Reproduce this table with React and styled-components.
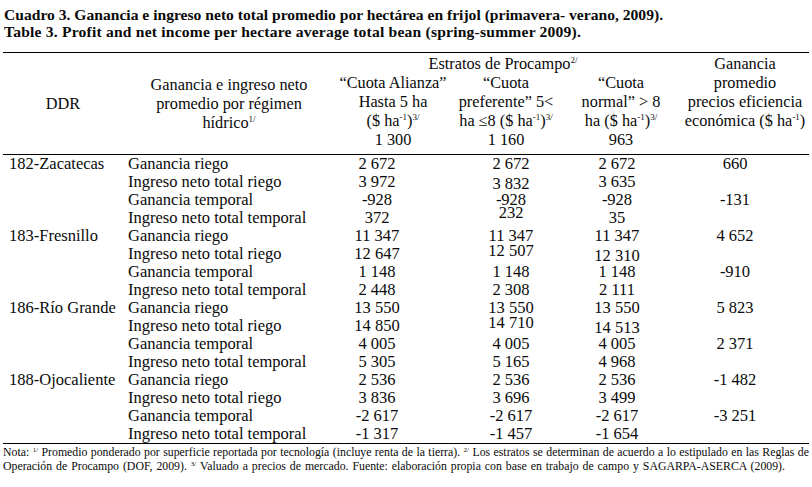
import styled, { createGlobalStyle } from 'styled-components';

const GlobalStyle = createGlobalStyle`
  body {
    margin: 0;
    background: #fff;
  }
`;

const Page = styled.div`
  width: 812px;
  height: 487px;
  overflow: hidden;
  box-sizing: border-box;
  padding: 6px 3px 0 3px;
  background: #fff;
  color: #0a0a0a;
  font-family: 'Liberation Serif', 'Times New Roman', serif;
`;

const Caption = styled.div`
  font-weight: bold;
  font-size: 15.6px;
  line-height: 17px;
  padding-left: 1px;
  margin-bottom: 12px;
`;

const CaptionLine = styled.div`
  white-space: nowrap;
  letter-spacing: ${(p) => p.$spacing || 0}px;
`;

const Table = styled.table`
  width: 806px;
  border-collapse: collapse;
  table-layout: fixed;
  font-size: 16.5px;
  border-top: 1px solid #000;
  border-bottom: 1px solid #000;
`;

const Head = styled.thead`
  border-bottom: 1px solid #000;
`;

const HeadCell = styled.th`
  font-weight: normal;
  font-size: 16.3px;
  line-height: 19px;
  padding: ${(p) => (p.$top ? '1px' : '0')} ${(p) => p.$pr || 0}px ${(p) => p.$pb || 0}px 0;
  text-align: center;
  vertical-align: ${(p) => (p.$middle ? 'middle' : 'top')};
  white-space: nowrap;
`;

const Sup = styled.sup`
  font-size: 9px;
  line-height: 0;
  vertical-align: 6px;
`;

const Row = styled.tr`
  height: 18px;
`;

const LabelCell = styled.td`
  padding: 0 0 0 ${(p) => p.$indent}px;
  line-height: 18px;
  white-space: nowrap;
  text-align: left;
`;

const NumCell = styled.td`
  padding: 0 ${(p) => (p.$shift < 0 ? -2 * p.$shift : 0)}px 0 ${(p) => (p.$shift > 0 ? 2 * p.$shift : 0)}px;
  line-height: 18px;
  text-align: center;
  white-space: nowrap;
`;

/* the scanned original has a few figures sitting off their baseline */
const Nudge = styled.span`
  line-height: 0;
  vertical-align: ${(p) => -p.$dy}px;
`;

const Notes = styled.div`
  font-size: 11.8px;
  line-height: 14px;
  padding: 1px 0 0 0;
`;

const NoteLine = styled.div`
  white-space: nowrap;
  text-align: ${(p) => (p.$justify ? 'justify' : 'left')};
  text-align-last: ${(p) => (p.$justify ? 'justify' : 'auto')};
  word-spacing: ${(p) => p.$wordSpacing || 0}px;
`;

const NoteSup = styled.sup`
  font-size: 7px;
  line-height: 0;
  vertical-align: 4px;
`;

const COLS = [120, 212, 116, 110, 120, 128];
const SHIFTS = [-16, 5, -4, -10];

const rows = [
  { ddr: '182-Zacatecas', label: 'Ganancia riego', v: ['2 672', '2 672', '2 672', '660'] },
  { label: 'Ingreso neto total riego', v: ['3 972', '3 832', '3 635', ''], dy: [0, 2, 0, 0] },
  { label: 'Ganancia temporal', v: ['-928', '-928', '-928', '-131'] },
  { label: 'Ingreso neto total temporal', v: ['372', '232', '35', ''], dy: [0, -5, 0, 0] },
  { ddr: '183-Fresnillo', label: 'Ganancia riego', v: ['11 347', '11 347', '11 347', '4 652'] },
  { label: 'Ingreso neto total riego', v: ['12 647', '12 507', '12 310', ''], dy: [0, -3, 2, 0] },
  { label: 'Ganancia temporal', v: ['1 148', '1 148', '1 148', '-910'] },
  { label: 'Ingreso neto total temporal', v: ['2 448', '2 308', '2 111', ''] },
  { ddr: '186-Río Grande', label: 'Ganancia riego', v: ['13 550', '13 550', '13 550', '5 823'] },
  { label: 'Ingreso neto total riego', v: ['14 850', '14 710', '14 513', ''], dy: [0, -3, 2, 0] },
  { label: 'Ganancia temporal', v: ['4 005', '4 005', '4 005', '2 371'] },
  { label: 'Ingreso neto total temporal', v: ['5 305', '5 165', '4 968', ''] },
  { ddr: '188-Ojocaliente', label: 'Ganancia riego', v: ['2 536', '2 536', '2 536', '-1 482'] },
  { label: 'Ingreso neto total riego', v: ['3 836', '3 696', '3 499', ''] },
  { label: 'Ganancia temporal', v: ['-2 617', '-2 617', '-2 617', '-3 251'] },
  { label: 'Ingreso neto total temporal', v: ['-1 317', '-1 457', '-1 654', ''] },
];

export default function App() {
  return (
    <Page>
      <GlobalStyle />
      <Caption>
        <CaptionLine>
          Cuadro 3. Ganancia e ingreso neto total promedio por hectárea en frijol (primavera- verano, 2009).
        </CaptionLine>
        <CaptionLine $spacing={0.2}>
          Table 3. Profit and net income per hectare average total bean (spring-summer 2009).
        </CaptionLine>
      </Caption>

      <Table>
        <colgroup>
          {COLS.map((w, i) => (
            <col key={i} style={{ width: w }} />
          ))}
        </colgroup>
        <Head>
          <tr>
            <HeadCell rowSpan={2} $middle>DDR</HeadCell>
            <HeadCell rowSpan={2} $middle>
              Ganancia e ingreso neto
              <br />
              promedio por régimen
              <br />
              hídrico<Sup>1/</Sup>
            </HeadCell>
            <HeadCell colSpan={3} $top $pr={10}>
              Estratos de Procampo<Sup>2/</Sup>
            </HeadCell>
            <HeadCell rowSpan={2} $top>
              Ganancia
              <br />
              promedio
              <br />
              precios eficiencia
              <br />
              económica ($ ha<Sup>-1</Sup>)
            </HeadCell>
          </tr>
          <tr>
            <HeadCell $pb={5}>
              “Cuota Alianza”
              <br />
              Hasta 5 ha
              <br />
              ($ ha<Sup>-1</Sup>)<Sup>3/</Sup>
              <br />1 300
            </HeadCell>
            <HeadCell $pb={5}>
              “Cuota
              <br />
              preferente” 5&lt;
              <br />
              ha ≤8 ($ ha<Sup>-1</Sup>)<Sup>3/</Sup>
              <br />1 160
            </HeadCell>
            <HeadCell $pb={5}>
              “Cuota
              <br />
              normal” &gt; 8
              <br />
              ha ($ ha<Sup>-1</Sup>)<Sup>3/</Sup>
              <br />
              963
            </HeadCell>
          </tr>
        </Head>
        <tbody>
          {rows.map((r, i) => (
            <Row key={i}>
              <LabelCell $indent={6}>{r.ddr || ''}</LabelCell>
              <LabelCell $indent={5}>{r.label}</LabelCell>
              {r.v.map((val, j) => (
                <NumCell key={j} $shift={SHIFTS[j]}>
                  <Nudge $dy={r.dy ? r.dy[j] : 0}>{val}</Nudge>
                </NumCell>
              ))}
            </Row>
          ))}
        </tbody>
      </Table>

      <Notes>
        <NoteLine $justify>
          Nota: <NoteSup>1/</NoteSup> Promedio ponderado por superficie reportada por tecnología (incluye renta de la
          tierra). <NoteSup>2/</NoteSup> Los estratos se determinan de acuerdo a lo estipulado en las Reglas de
        </NoteLine>
        <NoteLine $wordSpacing={1}>
          Operación de Procampo (DOF, 2009). <NoteSup>3/</NoteSup> Valuado a precios de mercado. Fuente: elaboración
          propia con base en trabajo de campo y SAGARPA-ASERCA (2009).
        </NoteLine>
      </Notes>
    </Page>
  );
}
